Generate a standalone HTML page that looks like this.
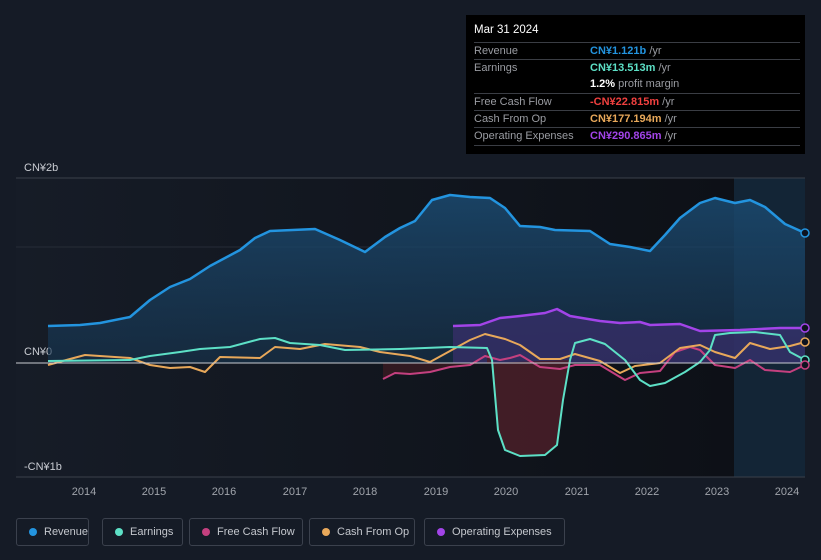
<!DOCTYPE html>
<html><head><meta charset="utf-8"><style>
body{margin:0;width:821px;height:560px;background:#151b26;font-family:"Liberation Sans",sans-serif;overflow:hidden;position:relative}
.tip{position:absolute;left:466px;top:15px;width:339px;height:139px;background:#000;color:#fff;font-size:11px}
.tip .h{position:absolute;left:8px;top:9px;font-size:11.5px}
.row{position:absolute;left:8px;width:326px;height:17px;border-top:1px solid #3a3d44;color:#9a9ca2}
.row span{position:absolute;left:116px;top:2px}
.row b{font-weight:bold}
.row i{font-style:normal;color:#9a9ca2}
.row .l{left:0}
.leg{position:absolute;top:518px;height:28px;border:1px solid #3b414d;border-radius:3px;color:#c4c7cd;font-size:11px;line-height:26px;box-sizing:border-box}
.leg:before{content:"";position:absolute;left:12px;top:9px;width:8px;height:8px;border-radius:50%;background:var(--c)}
.leg span{position:absolute;left:27px}
</style></head><body>
<svg width="821" height="560" style="position:absolute;left:0;top:0">
<defs>
<linearGradient id="bg" x1="0" x2="1"><stop offset="0" stop-color="#161c27"/><stop offset="1" stop-color="#0c0f15"/></linearGradient>
<linearGradient id="rf" x1="0" y1="0" x2="0" y2="1"><stop offset="0" stop-color="#1b4a70" stop-opacity=".85"/><stop offset="1" stop-color="#173550" stop-opacity=".6"/></linearGradient>
</defs>
<rect x="16" y="178" width="789" height="299" fill="url(#bg)"/>
<rect x="734" y="178" width="71" height="299" fill="#132536"/>
<line x1="16" y1="178" x2="805" y2="178" stroke="#3a404b"/>
<line x1="16" y1="247" x2="805" y2="247" stroke="#262c37"/>
<line x1="16" y1="477" x2="805" y2="477" stroke="#3a404b"/>
<text x="24" y="171" fill="#c9ccd2" font-size="11">CN¥2b</text>
<text x="24" y="355" fill="#c9ccd2" font-size="11">CN¥0</text>
<text x="24" y="470" fill="#c9ccd2" font-size="11">-CN¥1b</text>
<g fill="#a0a4ab" font-size="11" text-anchor="middle">
<text x="84" y="495">2014</text><text x="154" y="495">2015</text><text x="224" y="495">2016</text><text x="295" y="495">2017</text><text x="365" y="495">2018</text><text x="436" y="495">2019</text><text x="506" y="495">2020</text><text x="577" y="495">2021</text><text x="647" y="495">2022</text><text x="717" y="495">2023</text><text x="787" y="495">2024</text>
</g>
<path d="M48,363L48,326L80,325L100,323L130,317L150,300L170,287L190,279L210,266L240,250L255,238L270,231L315,229L340,240L365,252L385,237L400,228L415,221L432,200L450,195L470,197L490,198L505,208L520,226L540,227L555,230L590,231L610,244L630,247L650,251L665,235L680,218L700,203L715,198L735,203L750,200L765,207L785,224L805,233L805,363Z" fill="url(#rf)"/>
<path d="M453,363L453,326L480,325L500,318L520,316L545,313L557,309L570,316L600,321L620,323L640,322L650,325L680,324L700,331L740,330L780,328L805,328L805,363Z" fill="#3b2f6e" opacity=".7"/>
<path d="M487,363L487,348L492,360L498,430L505,450L520,456L545,455L557,445L563,400L570,360Z" fill="#4a1f28" opacity=".85"/>
<path d="M383,363L383,379L395,373L410,374L430,372L450,367L470,365L485,363Z" fill="#3a1a22" opacity=".8"/>
<path d="M48,326L80,325L100,323L130,317L150,300L170,287L190,279L210,266L240,250L255,238L270,231L315,229L340,240L365,252L385,237L400,228L415,221L432,200L450,195L470,197L490,198L505,208L520,226L540,227L555,230L590,231L610,244L630,247L650,251L665,235L680,218L700,203L715,198L735,203L750,200L765,207L785,224L805,233" fill="none" stroke="#2394df" stroke-width="2.5" stroke-linejoin="round"/>
<path d="M453,326L480,325L500,318L520,316L545,313L557,309L570,316L600,321L620,323L640,322L650,325L680,324L700,331L740,330L780,328L805,328" fill="none" stroke="#a244e8" stroke-width="2.5" stroke-linejoin="round"/>
<path d="M383,379L395,373L410,374L430,372L450,367L470,365L485,356L500,360L510,358L520,355L540,367L560,369L575,365L600,365L625,380L640,373L660,371L675,352L690,347L700,350L715,365L735,368L750,360L765,370L790,372L805,365" fill="none" stroke="#c4407f" stroke-width="2" stroke-linejoin="round"/>
<path d="M48,365L70,359L85,355L100,356L130,358L150,365L170,368L190,367L205,372L220,357L260,358L275,347L300,349L325,344L360,347L380,352L410,356L430,362L450,351L470,340L485,334L505,339L520,345L540,359L560,359L575,354L600,361L620,373L635,366L660,363L680,348L700,345L715,352L735,358L750,343L770,349L790,346L805,342" fill="none" stroke="#e8a85a" stroke-width="2" stroke-linejoin="round"/>
<path d="M48,361L130,360L150,356L180,352L200,349L230,347L260,339L275,338L290,343L320,345L345,350L400,349L450,347L487,348L492,360L498,430L505,450L520,456L545,455L557,445L563,400L570,360L575,343L590,339L605,344L625,360L640,380L650,386L665,383L685,372L700,362L710,350L715,335L730,333L755,332L780,335L790,352L805,360" fill="none" stroke="#5de0c6" stroke-width="2" stroke-linejoin="round"/>
<line x1="16" y1="363" x2="805" y2="363" stroke="#c9ccd2" stroke-width="1"/>
<circle cx="805" cy="233" r="4" fill="#0d1320" stroke="#2394df" stroke-width="1.5"/>
<circle cx="805" cy="328" r="4" fill="#0d1320" stroke="#a244e8" stroke-width="1.5"/>
<circle cx="805" cy="342" r="4" fill="#0d1320" stroke="#e8a85a" stroke-width="1.5"/>
<circle cx="805" cy="360" r="4" fill="#0d1320" stroke="#5de0c6" stroke-width="1.5"/>
<circle cx="805" cy="365" r="4" fill="#0d1320" stroke="#c4407f" stroke-width="1.5"/>
</svg>
<div class="tip">
<div class="h">Mar 31 2024</div>
<div class="row" style="top:27px"><span class="l">Revenue</span><span><b style="color:#2394df">CN¥1.121b</b> <i>/yr</i></span></div>
<div class="row" style="top:44px"><span class="l">Earnings</span><span><b style="color:#5de0c6">CN¥13.513m</b> <i>/yr</i></span></div>
<div class="row" style="top:61px;border-top:none"><span><b style="color:#fff">1.2%</b> <i>profit margin</i></span></div>
<div class="row" style="top:78px"><span class="l">Free Cash Flow</span><span><b style="color:#f0403f">-CN¥22.815m</b> <i>/yr</i></span></div>
<div class="row" style="top:95px"><span class="l">Cash From Op</span><span><b style="color:#e8a85a">CN¥177.194m</b> <i>/yr</i></span></div>
<div class="row" style="top:112px"><span class="l">Operating Expenses</span><span><b style="color:#a244e8">CN¥290.865m</b> <i>/yr</i></span></div>
<div class="row" style="top:130px;height:0"></div>
</div>
<div class="leg" style="left:16px;width:73px;--c:#2394df"><span>Revenue</span></div>
<div class="leg" style="left:102px;width:81px;--c:#5de0c6"><span>Earnings</span></div>
<div class="leg" style="left:189px;width:114px;--c:#c4407f"><span>Free Cash Flow</span></div>
<div class="leg" style="left:309px;width:106px;--c:#e8a85a"><span>Cash From Op</span></div>
<div class="leg" style="left:424px;width:141px;--c:#a244e8"><span>Operating Expenses</span></div>
</body></html>
